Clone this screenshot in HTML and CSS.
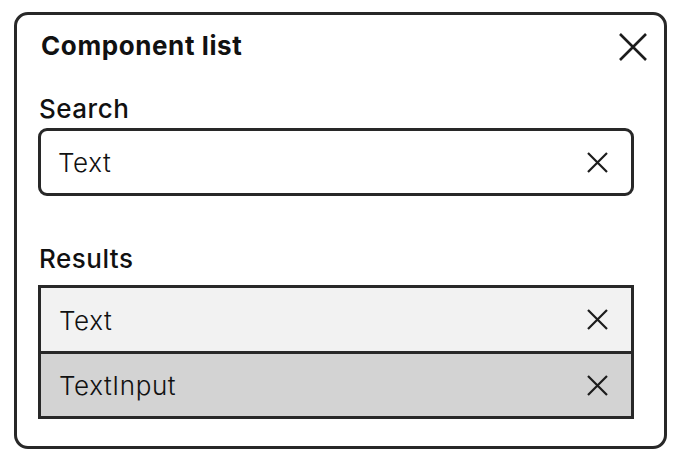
FILE: index.html
```html
<!DOCTYPE html>
<html>
<head>
<meta charset="utf-8">
<link rel="stylesheet" href="styles.css">
</head>
<body>
<div class="page">
  <div class="panel">
    <div class="header">
      <div class="title">Component list</div>
      <svg class="close" width="28" height="28" viewBox="0 0 28 28"><path d="M1 1L27 27M27 1L1 27" stroke="#1c1c1c" stroke-width="2.6" fill="none"/></svg>
    </div>
    <div class="label label-search">Search</div>
    <div class="input">
      <span class="input-text">Text</span>
      <svg class="x" width="21" height="21" viewBox="0 0 21 21"><path d="M1 1L20 20M20 1L1 20" stroke="#1c1c1c" stroke-width="2.2" fill="none"/></svg>
    </div>
    <div class="label label-results">Results</div>
    <div class="list">
      <div class="row row-light">
        <span class="row-text">Text</span>
        <svg class="x" width="21" height="21" viewBox="0 0 21 21"><path d="M1 1L20 20M20 1L1 20" stroke="#1c1c1c" stroke-width="2.2" fill="none"/></svg>
      </div>
      <div class="row row-dark">
        <span class="row-text">TextInput</span>
        <svg class="x" width="21" height="21" viewBox="0 0 21 21"><path d="M1 1L20 20M20 1L1 20" stroke="#1c1c1c" stroke-width="2.2" fill="none"/></svg>
      </div>
    </div>
  </div>
</div>
</body>
</html>
```
FILE: styles.css
```css
html, body {
  margin: 0;
  padding: 0;
  background: #ffffff;
}
body {
  font-family: "Inter", "Lato", sans-serif;
  color: #111111;
}
.page {
  padding: 12px 15px 0 14px;
}
.panel {
  border: 3px solid #282828;
  border-radius: 14px;
  padding: 14px 30px 27px 21px;
  background: #ffffff;
}
.header {
  display: flex;
  justify-content: space-between;
  align-items: center;
  height: 32px;
  margin-right: -13px;
}
.title {
  font-size: 26px;
  line-height: 32px;
  font-weight: 700;
  letter-spacing: 0.6px;
  padding-left: 3px;
  padding-top: 1px;
}
.close {
  display: block;
  margin-top: 4px;
}
.label {
  font-size: 26px;
  line-height: 32px;
  font-weight: 500;
  letter-spacing: 0.5px;
  padding-left: 1px;
}
.label-search {
  margin-top: 32px;
}
.label-results {
  margin-top: 47px;
}
.input {
  margin-top: 3px;
  height: 68px;
  box-sizing: border-box;
  border: 3px solid #282828;
  border-radius: 9px;
  display: flex;
  align-items: center;
  justify-content: space-between;
  padding: 0 23px 0 17px;
}
.input-text, .row-text {
  font-size: 26px;
  line-height: 32px;
  font-weight: 300;
  letter-spacing: 0.6px;
  padding-top: 2px;
}
.x {
  display: block;
}
.list {
  margin-top: 10px;
  border: 3px solid #282828;
}
.row {
  display: flex;
  align-items: center;
  justify-content: space-between;
  padding: 0 23px 0 18px;
}
.row-light {
  height: 63px;
  background: #f2f2f2;
  border-bottom: 3px solid #282828;
}
.row-dark {
  height: 62px;
  background: #d3d3d3;
}
```
